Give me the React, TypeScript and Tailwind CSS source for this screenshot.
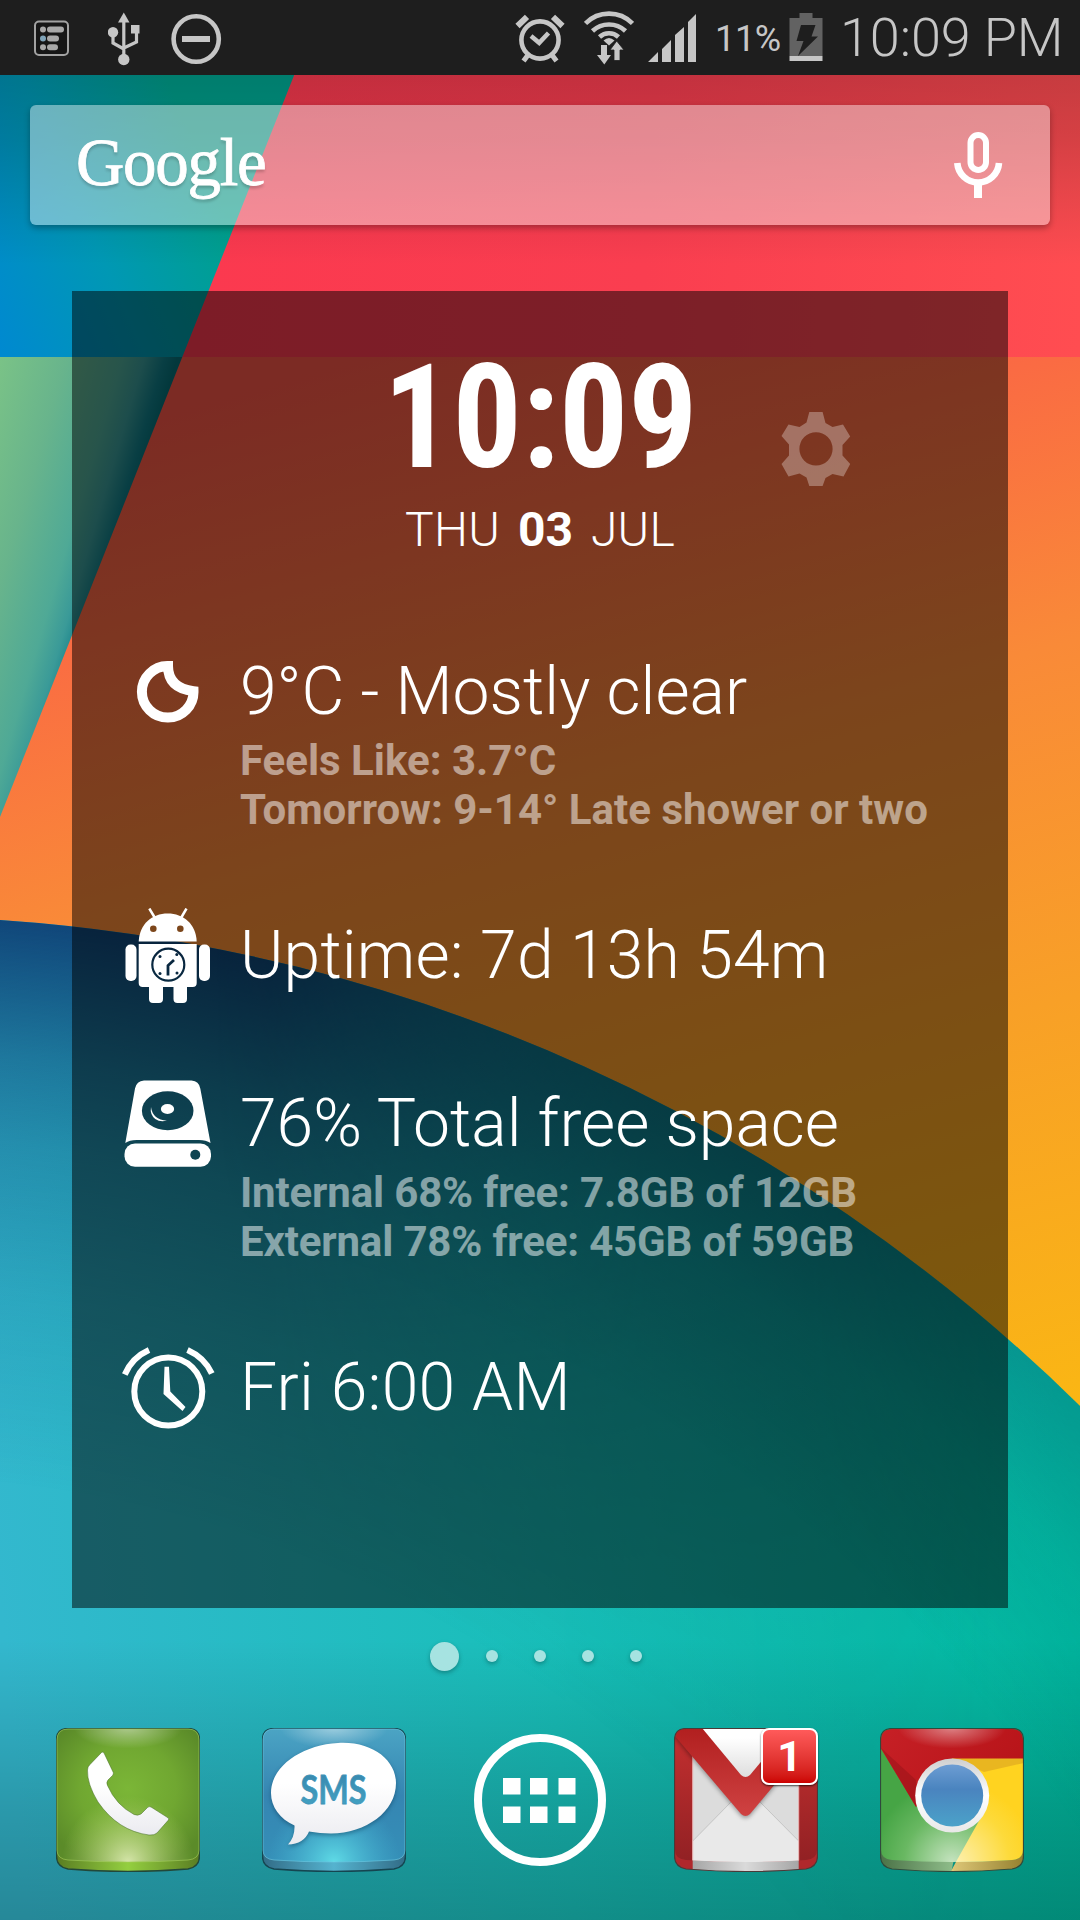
import type { ReactNode } from "react";

function Wallpaper() {
  return (
    <svg className="absolute inset-0" width="1080" height="1920" viewBox="0 0 1080 1920">
      <defs>
        <linearGradient id="wpBlue" gradientUnits="userSpaceOnUse" x1="0" y1="350" x2="240" y2="245">
          <stop offset="0" stopColor="#0089d0" />
          <stop offset="0.5" stopColor="#0098b4" />
          <stop offset="1" stopColor="#00a08c" />
        </linearGradient>
        <linearGradient id="wpRed" gradientUnits="userSpaceOnUse" x1="200" y1="300" x2="1080" y2="360">
          <stop offset="0" stopColor="#fb394f" />
          <stop offset="0.5" stopColor="#fa3e50" />
          <stop offset="1" stopColor="#ff4d51" />
        </linearGradient>
        <linearGradient id="wpGreen" gradientUnits="userSpaceOnUse" x1="-40" y1="470" x2="130" y2="520">
          <stop offset="0" stopColor="#7cc486" />
          <stop offset="0.4" stopColor="#68b48c" />
          <stop offset="0.7" stopColor="#4fa996" />
          <stop offset="0.82" stopColor="#3a9a98" />
          <stop offset="0.93" stopColor="#117d88" />
          <stop offset="1" stopColor="#067078" />
        </linearGradient>
        <linearGradient id="wpOrange" gradientUnits="userSpaceOnUse" x1="120" y1="423" x2="446" y2="1578">
          <stop offset="0" stopColor="#f95648" />
          <stop offset="0.16" stopColor="#fa6b43" />
          <stop offset="0.39" stopColor="#f98a38" />
          <stop offset="0.675" stopColor="#f8a027" />
          <stop offset="1" stopColor="#fab614" />
        </linearGradient>
        <linearGradient id="wpSea" gradientUnits="userSpaceOnUse" x1="0" y1="1600" x2="1080" y2="1500">
          <stop offset="0" stopColor="#33b8ce" />
          <stop offset="0.5" stopColor="#18bfb9" />
          <stop offset="1" stopColor="#00ba9f" />
        </linearGradient>
        <radialGradient id="wpShade" gradientUnits="userSpaceOnUse" cx="-116" cy="2620" r="1704">
          <stop offset="0.67" stopColor="#104478" stopOpacity="0" />
          <stop offset="0.78" stopColor="#104478" stopOpacity="0.15" />
          <stop offset="0.868" stopColor="#104478" stopOpacity="0.36" />
          <stop offset="0.92" stopColor="#104478" stopOpacity="0.56" />
          <stop offset="1" stopColor="#104478" stopOpacity="0.98" />
        </radialGradient>
        <radialGradient id="wpEdge" gradientUnits="userSpaceOnUse" cx="-116" cy="2620" r="1704">
          <stop offset="0.84" stopColor="#0c6478" stopOpacity="0" />
          <stop offset="0.93" stopColor="#0c6478" stopOpacity="0.22" />
          <stop offset="1" stopColor="#0c6478" stopOpacity="0.6" />
        </radialGradient>
        <linearGradient id="wpShadeFade" gradientUnits="userSpaceOnUse" x1="0" y1="0" x2="1080" y2="0">
          <stop offset="0" stopColor="#fff" />
          <stop offset="0.25" stopColor="#fff" />
          <stop offset="0.6" stopColor="#5c5c5c" />
          <stop offset="0.92" stopColor="#000" />
        </linearGradient>
        <linearGradient id="wpEdgeFade" gradientUnits="userSpaceOnUse" x1="0" y1="0" x2="1080" y2="0">
          <stop offset="0.2" stopColor="#000" />
          <stop offset="0.6" stopColor="#fff" />
          <stop offset="0.75" stopColor="#fff" />
          <stop offset="1" stopColor="#999" />
        </linearGradient>
        <mask id="wpShadeMask">
          <rect width="1080" height="1920" fill="url(#wpShadeFade)" />
        </mask>
        <mask id="wpEdgeMask">
          <rect width="1080" height="1920" fill="url(#wpEdgeFade)" />
        </mask>
        <linearGradient id="wpTop" x1="0" y1="0" x2="0" y2="1">
          <stop offset="0" stopColor="#000" stopOpacity="0.22" />
          <stop offset="0.35" stopColor="#000" stopOpacity="0.16" />
          <stop offset="1" stopColor="#000" stopOpacity="0" />
        </linearGradient>
        <linearGradient id="wpBottom" x1="0" y1="0" x2="0" y2="1">
          <stop offset="0" stopColor="#000" stopOpacity="0" />
          <stop offset="0.6" stopColor="#000" stopOpacity="0.17" />
          <stop offset="1" stopColor="#000" stopOpacity="0.26" />
        </linearGradient>
      </defs>
      <rect width="1080" height="358" fill="url(#wpRed)" />
      <rect y="357" width="1080" height="1100" fill="url(#wpOrange)" />
      <path d="M0 0H324L182.300 357H0Z" fill="url(#wpBlue)" />
      <path d="M0 357H182.300L0 817Z" fill="url(#wpGreen)" />
      <path d="M0 920A1704 1704 0 0 1 1080 1406V1920H0Z" fill="url(#wpSea)" />
      <path d="M0 920A1704 1704 0 0 1 1080 1406V1920H0Z" fill="url(#wpShade)" mask="url(#wpShadeMask)" />
      <path d="M0 920A1704 1704 0 0 1 1080 1406V1920H0Z" fill="url(#wpEdge)" mask="url(#wpEdgeMask)" />
      <rect y="75" width="1080" height="190" fill="url(#wpTop)" />
      <rect y="1640" width="1080" height="280" fill="url(#wpBottom)" />
    </svg>
  );
}

function StatusBar() {
  return (
    <header className="relative flex h-[75px] w-full items-start bg-[#1e1e1e] text-[#c6c6c6]">
      <svg className="mt-[20px] ml-[33px]" width="37" height="37" viewBox="33 20 37 37">
        <rect x="35" y="21.500" width="33" height="33.500" rx="4" fill="#161616" stroke="#a2a2a2" strokeWidth="2" />
        <g fill="#a8a8a8">
          <circle cx="43" cy="29.500" r="3" />
          <rect x="47" y="26.500" width="17" height="6" rx="3" />
          <circle cx="43" cy="38.500" r="3" fill="#7fa3b8" />
          <rect x="47" y="35.500" width="12" height="6" rx="3" />
          <circle cx="43" cy="47.300" r="3" />
          <rect x="47" y="44.300" width="11" height="6" rx="3" />
        </g>
      </svg>
      <svg className="mt-[12px] ml-[38px]" width="32" height="54" viewBox="108 12 32 54">
        <g fill="#c6c6c6">
          <path d="M123.800 12.500L129.500 22.500H118Z" />
          <circle cx="113" cy="32.200" r="5.200" />
          <rect x="131" y="25" width="8.500" height="8.500" />
          <circle cx="123.800" cy="59.500" r="5.700" />
        </g>
        <path d="M123.800 20V56M113 32V43L123.800 49M136.500 32V42L123.800 48" fill="none" stroke="#c6c6c6" strokeWidth="3.200" />
      </svg>
      <svg className="mt-[13px] ml-[31px]" width="51" height="52" viewBox="171 13 51 52">
        <ellipse cx="196.200" cy="39" rx="22.600" ry="22.800" fill="none" stroke="#c6c6c6" strokeWidth="4.600" />
        <rect x="182" y="36" width="28" height="6" fill="#c6c6c6" />
      </svg>
      <svg className="mt-[13px] ml-[293px]" width="50" height="50" viewBox="515 13 50 50">
        <g fill="none" stroke="#c6c6c6">
          <circle cx="540" cy="40" r="18.600" strokeWidth="4.600" />
          <path d="M517.500 26L527 16.800M562.500 26L553 16.800" strokeWidth="6" />
          <path d="M531 36L539.200 42.800L548.500 33" strokeWidth="4.500" />
          <path d="M528 55L523.500 61M552 55L556.500 61" strokeWidth="5" />
        </g>
      </svg>
      <svg className="mt-[10px] ml-[19px]" width="50" height="55" viewBox="584 10 50 55">
        <g fill="none" stroke="#c6c6c6" strokeWidth="4.600">
          <path d="M585.500 23.500A33 33 0 0 1 632.500 23.500" />
          <path d="M592.500 31A24 24 0 0 1 625.500 31" />
          <path d="M599.500 37A14 14 0 0 1 618.500 37" />
        </g>
        <g fill="#c6c6c6">
          <path d="M603.500 40.500Q609 35.500 614.500 40.500L609 45.500Z" />
          <path d="M601 45H607V55H611L604.300 64.500L597 55H601Z" />
          <path d="M614 60.500H620V50H624L616.700 41L610 50H614Z" stroke="#1e1e1e" strokeWidth="0.800" />
        </g>
      </svg>
      <svg className="mt-[14px] ml-[14px]" width="48" height="48" viewBox="648 14 48 48">
        <path d="M648 62L658 52V62ZM662 62V49L671 40V62ZM675 62V35L684 27V62ZM688 62V22L696 14V62Z" fill="#c6c6c6" />
      </svg>
      <span className="mt-[18px] ml-[19px] w-[67px] whitespace-nowrap font-[Roboto,sans-serif] text-[36px] leading-[42px] tracking-[-0.3px]">11%</span>
      <svg className="mt-[13px] ml-[7px]" width="34" height="48" viewBox="788.500 13 34 48">
        <path d="M799 13H812V18H822V56H789V18H799Z" fill="#626262" />
        <rect x="789" y="56" width="33" height="5" fill="#c6c6c6" />
        <path d="M800.500 25H815L811 36.500H817.500L797.500 56L803 41H796Z" fill="#1e1e1e" />
      </svg>
      <span className="mt-[6px] ml-[17px] whitespace-nowrap font-[Roboto,sans-serif] text-[54px] font-light leading-[64px] tracking-[-0.100px]">10:09 PM</span>
    </header>
  );
}

function SearchBar() {
  return (
    <div className="relative mx-[30px] mt-[30px] flex h-[120px] items-center justify-between rounded-[6px] bg-white/42 pr-[47px] pl-[46px] shadow-[0_3px_6px_rgba(0,0,0,0.3)]">
      <span className="mt-[-6px] font-['Liberation_Serif',serif] text-[67px] leading-[80px] tracking-[-1.300px] text-white [-webkit-text-stroke:0.800px_white] [text-shadow:0_3px_3px_rgba(0,0,0,0.2)]">Google</span>
      <svg className="mt-[-1px]" width="50" height="68" viewBox="953 131 50 68">
        <g fill="none" stroke="#fff">
          <rect x="970.500" y="135" width="15.500" height="35" rx="7.750" strokeWidth="6" />
          <path d="M957.300 163A20.900 20.900 0 0 0 999 163" strokeWidth="6.600" />
        </g>
        <rect x="974" y="184" width="8" height="14" fill="#fff" />
      </svg>
    </div>
  );
}

function MoonIcon() {
  return (
    <svg width="64" height="62" viewBox="136 661 64 62">
      <path d="M168 666A25.800 25.800 0 1 0 193.500 691.200Q168 688 168 666Z" fill="none" stroke="#fff" strokeWidth="10" />
    </svg>
  );
}

function AndroidIcon() {
  return (
    <svg width="86" height="96" viewBox="125 908 86 96">
      <mask id="robotMask">
        <rect x="120" y="900" width="100" height="110" fill="#fff" />
        <circle cx="153.300" cy="928.700" r="3.300" fill="#000" />
        <circle cx="180.300" cy="928.700" r="3.300" fill="#000" />
        <circle cx="168.300" cy="964.700" r="16" fill="none" stroke="#000" strokeWidth="2.200" />
        <path d="M174 960L168 965.500V975.500" fill="none" stroke="#000" strokeWidth="2.800" />
        <g fill="#000">
          <circle cx="160" cy="956.500" r="1.500" />
          <circle cx="176.800" cy="954.500" r="1.500" />
          <circle cx="160" cy="973.500" r="1.500" />
          <circle cx="177" cy="973" r="1.500" />
        </g>
      </mask>
      <g fill="#fff" mask="url(#robotMask)">
        <path d="M138.700 941.500C139.500 924 152 913.500 167.700 913.500S196 924 196.700 941.500Z" />
        <path d="M138.700 944H196.700V983Q196.700 987 192.700 987H187V999Q187 1003 183 1003H177.500Q173.500 1003 173.500 999V987H163V999Q163 1003 159 1003H153Q149 1003 149 999V987H142.700Q138.700 987 138.700 983Z" />
        <rect x="125.500" y="944.500" width="11" height="36.500" rx="5" />
        <rect x="199" y="944.500" width="11" height="36.500" rx="5" />
        <path d="M149.300 908.500L155 918M186.500 908.500L181 918" stroke="#fff" strokeWidth="2.500" />
      </g>
    </svg>
  );
}

function DiskIcon() {
  return (
    <svg width="88" height="88" viewBox="124 1080 88 88">
      <mask id="diskMask">
        <rect x="120" y="1075" width="100" height="100" fill="#fff" />
        <ellipse cx="167.700" cy="1110.700" rx="25.800" ry="19.500" fill="#000" />
        <circle cx="195.300" cy="1154.700" r="5" fill="#000" />
        <ellipse cx="167.500" cy="1109" rx="6.600" ry="5" fill="#fff" />
        <path d="M151 1107Q152.500 1119.500 167 1120.700Q155 1123 151.500 1114Q150.300 1110.500 151 1107Z" fill="#fff" />
      </mask>
      <g fill="#fff" mask="url(#diskMask)">
        <path d="M144 1080.500H191.500Q199 1081 200.300 1088.500L210.500 1143Q206 1140 199 1140H136.500Q129.500 1140 125.300 1143L135 1088.500Q136.500 1081 144 1080.500Z" />
        <rect x="124.500" y="1143.500" width="86.500" height="23.300" rx="10.500" />
      </g>
    </svg>
  );
}

function AlarmIcon() {
  return (
    <svg width="93" height="83" viewBox="122 1346 93 83">
      <g fill="none" stroke="#fff">
        <circle cx="168.300" cy="1391.500" r="34" strokeWidth="6" />
        <path d="M124.800 1374.500Q132 1357.500 149 1350M211.800 1373.500Q204.500 1357.500 187.500 1350" strokeWidth="6" />
      </g>
      <path d="M164.500 1366.700H169L170.300 1391.500L185.500 1407L182.500 1411L163.500 1394Z" fill="#fff" />
    </svg>
  );
}

function InfoRow({ icon, title, lines, className }: { icon: ReactNode; title: string; lines?: string[]; className: string }) {
  return (
    <div className={className}>
      {icon}
      <div className="whitespace-nowrap">
        <div className="text-[66px] font-light leading-[78px] text-white">{title}</div>
        {lines && (
          <div className="mt-[5px] text-[42px] font-bold leading-[49px] text-white/50">
            {lines.map((l) => (
              <div key={l}>{l}</div>
            ))}
          </div>
        )}
      </div>
    </div>
  );
}

function Widget() {
  return (
    <main className="relative mx-[72px] mt-[66px] h-[1317px] bg-black/50 pt-[66px] font-[Roboto,sans-serif] text-white">
      <div className="relative flex h-[145px] items-start justify-center">
        <span className="scale-x-[0.945] font-['Roboto_Condensed',Roboto,sans-serif] text-[145px] font-bold leading-[120px] [font-stretch:75%]">10:09</span>
        <svg className="absolute top-[54px] left-[709px]" width="70" height="76" viewBox="781 411 70 76">
          <path
            fill="#fff"
            fillOpacity="0.3"
            fillRule="evenodd"
            d="M809.300 412H822.600L825.500 423L832.500 427L843 424.500L850.200 436.500L842.500 445V455.500L850.200 464L843.500 476.500L832.500 474L825.500 478L822.600 486H809.300L806.500 477.500L799.500 473.500L788.500 476.500L781.500 464L789 455.500V444.500L781.500 436L788.500 424.500L799.500 427L806.500 422.500ZM816 432.200A16.500 16.600 0 1 0 816 465.600A16.500 16.600 0 1 0 816 432.200Z"
          />
        </svg>
      </div>
      <div className="flex justify-center gap-[18px] text-[48px] font-light leading-[56px]">
        <span className="tracking-[0.2px]">THU</span>
        <span className="font-bold">03</span>
        <span className="tracking-[0.2px]">JUL</span>
      </div>
      <div className="mt-[95px] flex flex-col">
        <InfoRow className="flex items-start [&>svg]:mt-[8px] [&>svg]:mr-[40px] [&>svg]:ml-[64px]" icon={<MoonIcon />} title="9°C - Mostly clear" lines={["Feels Like: 3.7°C", "Tomorrow: 9-14° Late shower or two"]} />
        <InfoRow className="mt-[83px] flex h-[78px] items-start tracking-[0.180px] [&>svg]:mt-[-9px] [&>svg]:mr-[29px] [&>svg]:ml-[53px]" icon={<AndroidIcon />} title="Uptime: 7d 13h 54m" />
        <InfoRow className="mt-[90px] flex items-start [&>div>div+div]:tracking-[-0.160px] [&>svg]:mt-[-5px] [&>svg]:mr-[28px] [&>svg]:ml-[52px]" icon={<DiskIcon />} title="76% Total free space" lines={["Internal 68% free: 7.8GB of 12GB", "External 78% free: 45GB of 59GB"]} />
        <InfoRow className="mt-[83px] flex items-start tracking-[0.300px] [&>svg]:mt-[-3px] [&>svg]:mr-[25px] [&>svg]:ml-[50px]" icon={<AlarmIcon />} title="Fri 6:00 AM" />
      </div>
    </main>
  );
}

const FACE = "M12 1H132Q143 1 143 12V122Q143 131 132 132Q72 136 12 132Q1 131 1 122V12Q1 1 12 1Z";
const TILE = "M12 .5H132Q143.500 .5 143.500 12V128Q143.500 139 132 141Q72 146 12 141Q.5 139 .5 128V12Q.5 .5 12 .5Z";

function PhoneTile() {
  return (
    <svg width="144" height="144" viewBox="0 0 144 144">
      <defs>
        <radialGradient id="phFace" cx="0.5" cy="0.45" r="0.62">
          <stop offset="0" stopColor="#7bb637" />
          <stop offset="0.55" stopColor="#70a731" />
          <stop offset="1" stopColor="#5b8b29" />
        </radialGradient>
        <radialGradient id="phGlow" gradientUnits="userSpaceOnUse" cx="72" cy="134" r="66">
          <stop offset="0" stopColor="#dbe9b0" stopOpacity="0.95" />
          <stop offset="1" stopColor="#b5d36b" stopOpacity="0" />
        </radialGradient>
        <radialGradient id="shine" gradientUnits="userSpaceOnUse" cx="72" cy="0" r="54" gradientTransform="matrix(1 0 0 .38 0 0)">
          <stop offset="0" stopColor="#fff" stopOpacity="0.45" />
          <stop offset="1" stopColor="#fff" stopOpacity="0" />
        </radialGradient>
        <linearGradient id="phBase">
          <stop offset="0" stopColor="#5a7d22" />
          <stop offset="0.5" stopColor="#94cf40" />
          <stop offset="1" stopColor="#5a7d22" />
        </linearGradient>
        <linearGradient id="handset" x1="0" y1="0" x2="0" y2="1">
          <stop offset="0.4" stopColor="#fff" />
          <stop offset="1" stopColor="#ebebf0" />
        </linearGradient>
      </defs>
      <path d={TILE} fill="url(#phBase)" stroke="#22483a" strokeWidth="1.400" />
      <path d={FACE} fill="url(#phFace)" />
      <path d={FACE} fill="url(#phGlow)" />
      <path d={FACE} fill="url(#shine)" stroke="#a5cf5c" strokeOpacity="0.6" strokeWidth="1" />
      <path d="M45.500 24.500Q47 23.500 48 25L57.300 44.500Q57.800 46 56.500 47.500L52 52Q50 54.500 51.500 57.500Q60 77 78 86.500Q82 88 85 86L91.500 79.500Q93 78 95 79L112 89.800Q113.500 91 112 92.500L101 105Q98.500 107.500 93 107Q62 103 42 74Q31 56 31.500 42Q31.500 38.500 34 36.500Z" fill="url(#handset)" stroke="#3f6a20" strokeOpacity="0.5" strokeWidth="1" />
    </svg>
  );
}

function SmsTile() {
  return (
    <svg width="144" height="144" viewBox="0 0 144 144">
      <defs>
        <linearGradient id="smFace" x1="0" y1="0" x2="0" y2="1">
          <stop offset="0" stopColor="#4ba4c4" />
          <stop offset="0.5" stopColor="#3585b2" />
          <stop offset="1" stopColor="#3590b8" />
        </linearGradient>
        <radialGradient id="smGlow" gradientUnits="userSpaceOnUse" cx="72" cy="134" r="66">
          <stop offset="0" stopColor="#5fdbe6" />
          <stop offset="1" stopColor="#44b4d4" stopOpacity="0" />
        </radialGradient>
        <linearGradient id="smBase">
          <stop offset="0" stopColor="#326c87" />
          <stop offset="0.5" stopColor="#55b3cf" />
          <stop offset="1" stopColor="#326c87" />
        </linearGradient>
        <linearGradient id="smText" x1="0" y1="0" x2="0" y2="1">
          <stop offset="0" stopColor="#3582a9" />
          <stop offset="1" stopColor="#45a6c6" />
        </linearGradient>
      </defs>
      <path d={TILE} fill="url(#smBase)" stroke="#154550" strokeWidth="1.400" />
      <path d={FACE} fill="url(#smFace)" />
      <path d={FACE} fill="url(#smGlow)" />
      <path d={FACE} fill="url(#shine)" stroke="#6ecbe4" strokeOpacity="0.6" strokeWidth="1" />
      <g className="drop-shadow-[0_2px_2px_rgba(0,40,70,0.4)]">
        <path d="M76 15C110 13 134 32 134 55C134 84 104 105 69 105.500Q58 105.500 47 103.500Q42 116 26 116.500Q33 109 32.500 97.500C18 91 9 79 9 65C9 38 40 17 76 15Z" fill="url(#handset)" />
      </g>
      <text x="38.500" y="75.500" fontFamily="Lato, sans-serif" fontWeight="700" fontSize="41" textLength="66" lengthAdjust="spacingAndGlyphs" fill="url(#smText)" stroke="#3f94b8" strokeWidth="0.800">SMS</text>
    </svg>
  );
}

function AppsIcon() {
  return (
    <svg width="144" height="144" viewBox="0 0 144 144">
      <circle cx="72" cy="72" r="62" fill="none" stroke="#fff" strokeWidth="8" />
      <g fill="#fff">
        <rect x="35" y="50" width="17.500" height="16.500" />
        <rect x="62" y="50" width="17.500" height="16.500" />
        <rect x="90.500" y="50" width="17" height="16.500" />
        <rect x="35" y="78.500" width="17.500" height="16.500" />
        <rect x="62" y="78.500" width="17.500" height="16.500" />
        <rect x="90.500" y="78.500" width="17" height="16.500" />
      </g>
    </svg>
  );
}

function GmailTile() {
  return (
    <div className="relative h-[144px] w-[144px]">
      <svg width="144" height="144" viewBox="0 0 144 144">
        <defs>
          <clipPath id="gmTileClip"><path d={TILE} /></clipPath>
          <clipPath id="gmFaceClip"><path d={FACE} /></clipPath>
          <linearGradient id="gmSide" x1="0" y1="0" x2="0" y2="1">
            <stop offset="0" stopColor="#c53030" />
            <stop offset="1" stopColor="#8f2023" />
          </linearGradient>
          <linearGradient id="gmV" x1="0" y1="0" x2="0" y2="1">
            <stop offset="0" stopColor="#b11f1f" />
            <stop offset="1" stopColor="#cf4242" />
          </linearGradient>
          <linearGradient id="gmTop" x1="0" y1="0" x2="0" y2="1">
            <stop offset="0.2" stopColor="#fff" />
            <stop offset="1" stopColor="#dedede" />
          </linearGradient>
          <linearGradient id="gmBase" gradientUnits="userSpaceOnUse" x1="18" y1="0" x2="125" y2="0">
            <stop offset="0" stopColor="#a5a5a5" />
            <stop offset="0.5" stopColor="#dadada" />
            <stop offset="1" stopColor="#a5a5a5" />
          </linearGradient>
        </defs>
        <g clipPath="url(#gmTileClip)">
          <rect width="144" height="146" fill="#b0282c" />
          <rect x="18.700" y="30" width="106" height="116" fill="url(#gmBase)" />
        </g>
        <g clipPath="url(#gmFaceClip)">
          <rect width="144" height="140" fill="url(#gmSide)" />
          <rect x="18.700" y="20" width="106" height="116" fill="#dcdcdc" />
          <path d="M18.700 113L62 69H81L124.700 113V136H18.700Z" fill="#e9e9e9" />
          <path d="M18.700 113L58 73M124.700 113L85 73" stroke="#c4c4c4" strokeWidth="1" />
          <path d="M18.700 28V136M124.700 28V136" stroke="#e9b0b0" strokeWidth="1" />
          <path className="drop-shadow-[0_2px_2px_rgba(0,0,0,0.35)]" d="M0 0H144L143 6L76 86Q71.500 90 67 86L0 7Z" fill="url(#gmV)" />
          <path d="M28 0H115L76 47Q71.500 51 67 47Z" fill="url(#gmTop)" />
        </g>
        <path d={TILE} fill="none" stroke="#4a3a38" strokeWidth="1.200" />
      </svg>
      <div className="absolute top-0 right-0 flex h-[57px] w-[57px] items-center justify-center rounded-[8px] border-2 border-white bg-gradient-to-b from-[#ff5a5a] to-[#cc0000] font-[Roboto,sans-serif] text-[43px] font-bold text-white shadow-[0_1px_2px_rgba(0,0,0,0.7)]">1</div>
    </div>
  );
}

function ChromeTile() {
  return (
    <svg width="144" height="144" viewBox="0 0 144 144">
      <defs>
        <clipPath id="crTileClip"><path d={TILE} /></clipPath>
        <clipPath id="crFaceClip"><path d={FACE} /></clipPath>
        <linearGradient id="crRed" x1="0" y1="0" x2="1" y2="0.4">
          <stop offset="0" stopColor="#c62026" />
          <stop offset="1" stopColor="#b81419" />
        </linearGradient>
        <radialGradient id="crGreen" gradientUnits="userSpaceOnUse" cx="72" cy="134" r="80">
          <stop offset="0" stopColor="#c5e3bf" />
          <stop offset="0.6" stopColor="#69b862" />
          <stop offset="1" stopColor="#46a545" />
        </radialGradient>
        <radialGradient id="crYellow" gradientUnits="userSpaceOnUse" cx="74" cy="134" r="80">
          <stop offset="0" stopColor="#fdf0b0" />
          <stop offset="0.7" stopColor="#fdda3a" />
          <stop offset="1" stopColor="#ffd320" />
        </radialGradient>
        <linearGradient id="crBlue" x1="0" y1="0" x2="0" y2="1">
          <stop offset="0" stopColor="#6d9dd3" />
          <stop offset="0.4" stopColor="#4a84bf" />
          <stop offset="1" stopColor="#4ba2c9" />
        </linearGradient>
        <linearGradient id="crRing" x1="0" y1="0" x2="0" y2="1">
          <stop offset="0" stopColor="#cfcfcf" />
          <stop offset="0.5" stopColor="#fff" />
          <stop offset="1" stopColor="#e8e8e8" />
        </linearGradient>
        <linearGradient id="crBaseG">
          <stop offset="0" stopColor="#4b7247" />
          <stop offset="1" stopColor="#95c490" />
        </linearGradient>
        <linearGradient id="crBaseY">
          <stop offset="0" stopColor="#e0c97a" />
          <stop offset="1" stopColor="#94802e" />
        </linearGradient>
      </defs>
      <g clipPath="url(#crTileClip)">
        <path d="M0 100H80L71 146H0Z" fill="url(#crBaseG)" />
        <path d="M77 132L69.500 146H144V100H90Z" fill="url(#crBaseY)" />
      </g>
      <g clipPath="url(#crFaceClip)">
        <rect width="144" height="140" fill="url(#crGreen)" />
        <path d="M72 30H144V140H72.500L104 84Z" fill="url(#crYellow)" />
        <path d="M72 30H144V35L104 44Z" fill="#d79f20" fillOpacity="0.55" />
        <path d="M0 0H144V30.500H72L36 79L0 19Z" fill="url(#crRed)" />
        <path d="M1 20L36 79V52Z" fill="#8c1216" fillOpacity="0.4" />
        <rect width="144" height="30" fill="url(#shine)" />
      </g>
      <circle cx="72.200" cy="67.500" r="37" fill="url(#crRing)" />
      <circle cx="72.200" cy="67.500" r="31" fill="url(#crBlue)" />
      <path d={TILE} fill="none" stroke="#2f4a3c" strokeWidth="1.200" />
    </svg>
  );
}

function PageDots() {
  return (
    <div className="relative mt-[33px] flex h-[30px] items-center gap-[36px] pl-[429.500px]">
      <span className="mr-[-8.500px] h-[29px] w-[29px] rounded-full bg-[#a6e3e1] shadow-[0_2px_4px_rgba(0,60,60,0.4)]" />
      {[1, 2, 3, 4].map((n) => (
        <span key={n} className="h-[12px] w-[12px] rounded-full bg-[#a6e3e1] shadow-[0_2px_4px_rgba(0,60,60,0.4)]" />
      ))}
    </div>
  );
}

export default function App() {
  return (
    <div className="relative flex h-[1920px] w-[1080px] flex-col overflow-hidden">
      <Wallpaper />
      <StatusBar />
      <SearchBar />
      <Widget />
      <PageDots />
      <nav className="relative mt-[57px] flex gap-[62px] pl-[56px]">
        <PhoneTile />
        <SmsTile />
        <AppsIcon />
        <GmailTile />
        <ChromeTile />
      </nav>
    </div>
  );
}
